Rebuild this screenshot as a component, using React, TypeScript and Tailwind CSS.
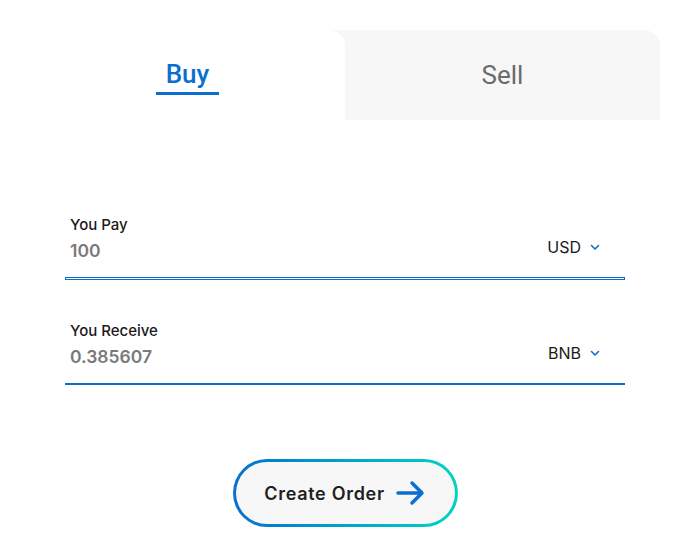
import React from 'react';

const BLUE = '#0b6fd0';

function Chevron() {
  return (
    <svg width="10" height="7" viewBox="0 0 10 7" className="ml-[9px]">
      <path d="M1.5 1.5 L5 5 L8.5 1.5" fill="none" stroke={BLUE} strokeWidth="1.6" strokeLinecap="round" strokeLinejoin="round" />
    </svg>
  );
}

function Field({ label, value, currency, focused }: { label: string; value: string; currency: string; focused?: boolean }) {
  return (
    <div className="w-[560px]">
      <div className="pl-[5px] text-[15px] leading-5 font-medium text-[#1a1a1a]">{label}</div>
      <div className="mt-[4px] flex items-center justify-between pl-[5px]">
        <span className="text-[17.5px] leading-6 font-semibold text-[#7a7a7a]">{value}</span>
        <span className="-mt-[8px] mr-[25px] flex items-center text-[16px] leading-6 text-[#1a1a1a]">
          {currency}
          <Chevron />
        </span>
      </div>
      {focused ? (
        <div className="mt-[14px] h-[3px] border border-[#0b6fd0] bg-white" />
      ) : (
        <div className="mt-[14px] h-[2px] bg-[#0b6fd0]" />
      )}
    </div>
  );
}

export default function App() {
  return (
    <div className="h-[557px] w-[694px] bg-white" style={{ fontFamily: 'Inter, "Noto Sans", sans-serif' }}>
      <div className="ml-[30px] w-[630px] pt-[30px]">
        {/* Tabs */}
        <div className="flex h-[90px] rounded-t-[16px] bg-[#f7f7f7]">
          <div className="flex w-[315px] flex-col items-center rounded-t-[16px] bg-white pt-[30px]">
            <span className="text-[26px] leading-7 font-medium text-[#0b6fd0]" style={{ fontFamily: 'Roboto, sans-serif' }}>Buy</span>
            <div className="mt-[4px] h-[3px] w-[63px] bg-[#0b6fd0]" />
          </div>
          <div className="flex flex-1 justify-center pt-[31px]">
            <span className="text-[26px] leading-7 text-[#6b6b6b]" style={{ fontFamily: 'Roboto, sans-serif' }}>Sell</span>
          </div>
        </div>

        {/* Form */}
        <div className="flex flex-col items-center pt-[95px]">
          <Field label="You Pay" value="100" currency="USD" focused />
          <div className="h-[41px]" />
          <Field label="You Receive" value="0.385607" currency="BNB" />

          <button className="mt-[74px] rounded-full bg-linear-to-r from-[#0b6fd0] to-[#00d4c2] p-[3px]">
            <div className="flex h-[62px] w-[219px] items-center justify-center gap-[11px] rounded-full bg-[#f7f7f7]">
              <span className="text-[18px] font-semibold tracking-[0.7px] text-[#1f1f1f]">Create Order</span>
              <svg width="30" height="26" viewBox="0 0 30 26">
                <path d="M2 13 H26 M16 3 L26 13 L16 23" fill="none" stroke={BLUE} strokeWidth="3.5" strokeLinecap="round" strokeLinejoin="round" />
              </svg>
            </div>
          </button>
        </div>
      </div>
    </div>
  );
}
